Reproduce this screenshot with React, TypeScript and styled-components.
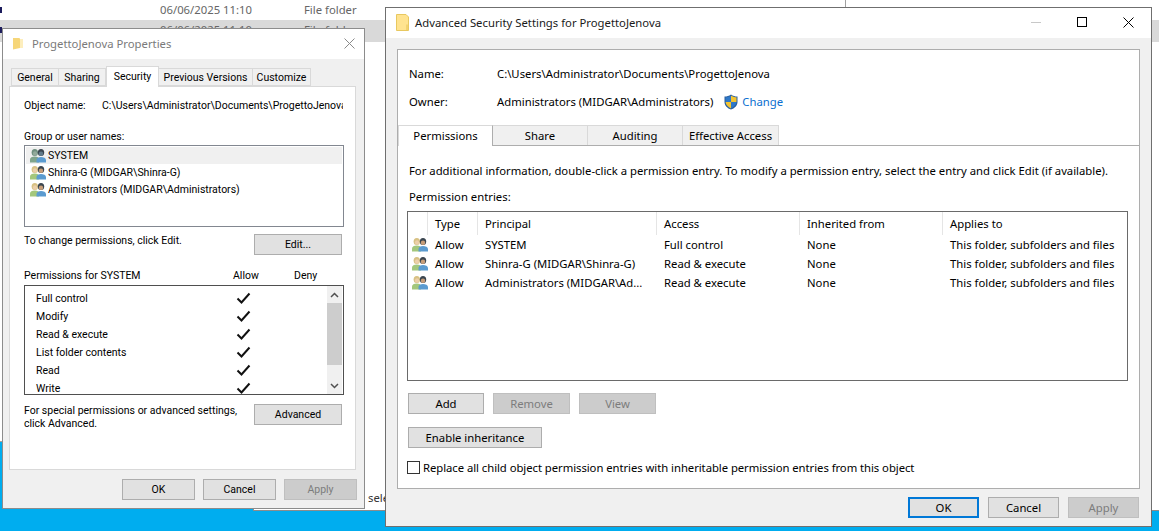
import React from 'react';
import styled, { createGlobalStyle } from 'styled-components';

const NOTO = `"Noto Sans", "Open Sans", "Liberation Sans", sans-serif`;
const ROBOTO = `Roboto, "Liberation Sans", sans-serif`;

const GlobalStyle = createGlobalStyle`
  html, body {
    margin: 0;
    padding: 0;
    background: #00adef;
  }
  body {
    width: 1159px;
    height: 531px;
    overflow: hidden;
    font-family: ${NOTO};
    font-size: 11.3px;
    color: #000;
  }
`;

const Desktop = styled.div`
  position: relative;
  width: 1159px;
  height: 531px;
  overflow: hidden;
  background: #00adef;
`;

const Explorer = styled.div`
  position: absolute;
  left: 0;
  top: 0;
  width: 1159px;
  height: 442px;
  background: #fff;
  border-bottom: 1px solid #a0a0a0;
  box-sizing: border-box;
`;
const ExplorerRow = styled.div<{ $selected?: boolean }>`
  display: grid;
  grid-template-columns: 160px 144px 1fr;
  height: ${p => (p.$selected ? 22 : 20)}px;
  line-height: 20px;
  color: #666;
  background: ${p => (p.$selected ? '#d9d9d9' : '#fff')};
`;
const ExplorerMark = styled.span`
  width: 2px;
  height: 6px;
  margin-top: 7px;
  background: #1c1c5c;
`;
const ExplorerDivider = styled.div`
  position: absolute;
  left: 845px;
  top: 0;
  width: 1px;
  height: 8px;
  background: #a0a0a0;
`;
const StatusWindow = styled.div`
  position: absolute;
  left: 253px;
  top: 440px;
  width: 906px;
  height: 71px;
  box-sizing: border-box;
  background: #fff;
  border-bottom: 1px solid #8c8c8c;
  border-left: 1px solid #8c8c8c;
  padding: 50px 0 0 114px;
  color: #333;
`;

const Window = styled.div`
  position: absolute;
  box-sizing: border-box;
  display: flex;
  flex-direction: column;
  background: #f0f0f0;
  border: 1px solid #6f6f6f;
`;
const PropsWindow = styled(Window)`
  left: 2px;
  top: 28px;
  width: 363px;
  height: 481px;
  border-color: #8c8c8c;
  font-family: ${ROBOTO};
  font-size: 10.5px;
`;
const AdvancedWindow = styled(Window)`
  left: 385px;
  top: 7px;
  width: 767px;
  height: 520px;
`;
const TitleBar = styled.div<{ $inset: number }>`
  box-sizing: border-box;
  display: flex;
  align-items: center;
  height: 30px;
  flex: none;
  padding: 0 0 2px ${p => p.$inset}px;
  background: #fff;
`;
const TitleText = styled.div<{ $dim?: boolean; $gap: number }>`
  font-family: ${NOTO};
  font-size: 11.3px;
  color: ${p => (p.$dim ? '#7a7a7a' : '#1a1a1a')};
  margin-left: ${p => p.$gap}px;
`;
const Spacer = styled.div`
  flex: 1;
`;
const CaptionButton = styled.div<{ $w: number }>`
  width: ${p => p.$w}px;
  display: flex;
  justify-content: center;
  align-items: center;
`;

const PropsBody = styled.div`
  display: flex;
  flex-direction: column;
  flex: 1;
  padding: 9px 7px 0 6px;
`;
const PropsTabs = styled.div`
  display: flex;
  align-items: flex-end;
  height: 18px;
  margin-left: 2px;
  position: relative;
  z-index: 1;
`;
const PropsTab = styled.div<{ $w: number; $active?: boolean }>`
  box-sizing: border-box;
  width: ${p => p.$w}px;
  height: ${p => (p.$active ? 21 : 18)}px;
  margin-bottom: ${p => (p.$active ? -1 : 0)}px;
  border: 1px solid #d9d9d9;
  border-bottom: ${p => (p.$active ? 'none' : '1px solid #d9d9d9')};
  border-left: ${p => (p.$active ? '1px solid #d9d9d9' : 'none')};
  background: ${p => (p.$active ? '#fff' : '#f0f0f0')};
  text-align: center;
  line-height: ${p => (p.$active ? 19 : 18)}px;
  &:first-child {
    border-left: 1px solid #d9d9d9;
  }
`;
const PropsPanel = styled.div`
  box-sizing: border-box;
  width: 347px;
  height: 384px;
  border: 1px solid #d9d9d9;
  background: #fff;
  padding: 11px 0 0 14px;
  display: flex;
  flex-direction: column;
`;
const Line = styled.div<{ $top?: number }>`
  height: 16px;
  line-height: 16px;
  margin-top: ${p => p.$top ?? 0}px;
  white-space: nowrap;
`;
const ObjectRow = styled(Line)`
  display: grid;
  grid-template-columns: 78px 241px;
  width: 320px;
`;
const ObjectPath = styled.span`
  overflow: hidden;
`;
const UserList = styled.div`
  box-sizing: border-box;
  width: 320px;
  height: 82px;
  padding: 1px;
  border: 1px solid #828790;
`;
const UserRow = styled.div<{ $selected?: boolean }>`
  display: flex;
  align-items: center;
  gap: 2px;
  height: 17px;
  padding-left: 4px;
  background: ${p => (p.$selected ? '#f0f0f0' : '#fff')};
`;
const SplitRow = styled.div<{ $top: number }>`
  display: flex;
  justify-content: space-between;
  width: 318px;
  margin-top: ${p => p.$top}px;
`;
const SideText = styled.div`
  line-height: 13px;
`;
const HeaderRow = styled.div`
  display: grid;
  grid-template-columns: 209px 61px 1fr;
  width: 320px;
  height: 16px;
  line-height: 16px;
  margin-top: 13px;
`;
const PermList = styled.div`
  position: relative;
  box-sizing: border-box;
  width: 320px;
  height: 110px;
  margin-top: 1px;
  padding-top: 3px;
  border: 1px solid #4f4f4f;
`;
const PermRow = styled.div`
  display: grid;
  grid-template-columns: 200px 30px;
  align-items: center;
  height: 18px;
  padding-left: 11px;
`;
const ScrollBar = styled.div`
  position: absolute;
  right: 1px;
  top: 0;
  bottom: 0;
  width: 15px;
  background: #f0f0f0;
  display: flex;
  flex-direction: column;
`;
const ScrollArrow = styled.div`
  height: 17px;
  display: flex;
  align-items: center;
  justify-content: center;
`;
const ScrollThumb = styled.div`
  height: 62px;
  background: #cdcdcd;
`;
const ScrollTrack = styled.div`
  flex: 1;
`;

const Button = styled.div<{ $w: number; $disabled?: boolean; $default?: boolean }>`
  box-sizing: border-box;
  flex: none;
  width: ${p => p.$w}px;
  height: 21px;
  display: flex;
  align-items: center;
  justify-content: center;
  background: ${p => (p.$disabled ? '#cccccc' : '#e1e1e1')};
  border: ${p =>
    p.$default
      ? '2px solid #0078d7'
      : p.$disabled
        ? '1px solid #bfbfbf'
        : '1px solid #adadad'};
  color: ${p => (p.$disabled ? '#7c7c7c' : '#000')};
`;
const Footer = styled.div<{ $top: number; $gap: number; $right?: number }>`
  display: flex;
  justify-content: flex-end;
  gap: ${p => p.$gap}px;
  padding-top: ${p => p.$top}px;
  padding-right: ${p => p.$right ?? 0}px;
`;

const AdvBody = styled.div`
  flex: 1;
  display: flex;
  flex-direction: column;
  padding: 11px 11px 0 11px;
`;
const AdvPanel = styled.div`
  box-sizing: border-box;
  width: 743px;
  height: 440px;
  border: 1px solid #adadad;
  background: #fff;
  display: flex;
  flex-direction: column;
`;
const InfoGrid = styled.div`
  display: grid;
  grid-template-columns: 88px 1fr;
  grid-auto-rows: 16px;
  row-gap: 12px;
  padding: 16px 0 0 11px;
  line-height: 16px;
`;
const OwnerCell = styled.div`
  display: flex;
  align-items: center;
  gap: 4px;
`;
const ShieldSlot = styled.span`
  display: flex;
  margin-left: 7px;
`;
const ChangeLink = styled.span`
  color: #0a6fd0;
`;
const AdvTabs = styled.div`
  display: flex;
  height: 21px;
  margin-top: 15px;
  border-bottom: 1px solid #adadad;
  box-sizing: border-box;
`;
const AdvTab = styled.div<{ $active?: boolean; $w: number }>`
  box-sizing: border-box;
  width: ${p => p.$w}px;
  height: ${p => (p.$active ? 21 : 20)}px;
  border: 1px solid #d9d9d9;
  border-left: ${p => (p.$active ? '1px solid #d9d9d9' : 'none')};
  border-right: ${p => (p.$active ? '1px solid #adadad' : '1px solid #d9d9d9')};
  border-bottom: none;
  background: ${p => (p.$active ? '#fff' : '#f0f0f0')};
  text-align: center;
  line-height: 19px;
  position: relative;
`;
const PermContent = styled.div`
  display: flex;
  flex-direction: column;
  padding: 17px 0 0 11px;
`;
const EntryTable = styled.div`
  box-sizing: border-box;
  width: 721px;
  height: 170px;
  margin: 6px 0 0 -2px;
  border: 1px solid #6a6a6a;
`;
const COLUMNS = '20px 50px 179px 143px 143px 1fr';
const TableHead = styled.div`
  display: grid;
  grid-template-columns: ${COLUMNS};
  height: 23px;
  line-height: 24px;
`;
const HeadCell = styled.div`
  padding-left: 7px;
  border-right: 1px solid #e5e5e5;
  height: 23px;
  &:last-child {
    border-right: none;
  }
`;
const TableRow = styled.div`
  display: grid;
  grid-template-columns: ${COLUMNS};
  height: 19px;
  line-height: 19px;
`;
const Cell = styled.div`
  padding-left: 7px;
  white-space: nowrap;
`;
const IconCell = styled.div`
  display: flex;
  align-items: center;
  padding-left: 4px;
`;
const ButtonRow = styled.div<{ $top: number }>`
  display: flex;
  gap: 9px;
  margin: ${p => p.$top}px 0 0 -1px;
`;
const CheckRow = styled.div`
  display: flex;
  align-items: center;
  gap: 3px;
  height: 14px;
  margin: 12px 0 0 -2px;
  letter-spacing: -0.05px;
`;
const CheckBox = styled.div`
  box-sizing: border-box;
  width: 13px;
  height: 13px;
  border: 1px solid #333;
  background: #fff;
`;

const FolderIcon = () => (
  <svg width="13" height="17" viewBox="0 0 13 17">
    <path d="M0.500 0.500H10L12.500 3V16.500H0.500z" fill="#ffe38f" stroke="#e8c860" />
    <path d="M10 10.500H12V16H10z" fill="#f3d26f" />
  </svg>
);

const SmallFolderIcon = () => (
  <svg width="10" height="13" viewBox="0 0 10 13">
    <path d="M0 1H6.500L7 2V11L0 12.500z" fill="#f6d679" />
    <path d="M7 2H10V11H7z" fill="#fdeebd" />
  </svg>
);

const UsersIcon = ({ gray }: { gray?: boolean }) => (
  <svg width="16" height="14" viewBox="0 0 16 14">
    <ellipse cx="4.800" cy="3.600" rx="3.200" ry="3.500" fill={gray ? '#6f8f7f' : '#d8c184'} />
    <ellipse cx="5" cy="4.500" rx="2.100" ry="2.200" fill={gray ? '#93aa9c' : '#eccfaa'} />
    <path d="M0 13.500V10.500c0-2 2-3 4.800-3S9 8.500 9 10.500v3z" fill={gray ? '#7fa48c' : '#a3c77c'} />
    <ellipse cx="11" cy="3.600" rx="3.200" ry="3.500" fill="#3b4650" />
    <ellipse cx="11" cy="4.700" rx="2.200" ry="2.200" fill={gray ? '#607a8a' : '#c79d78'} />
    <path d="M6.500 13.500V11c0-2 2-3 4.500-3s5 1 5 3v2.500z" fill="#5b9bd0" />
  </svg>
);

const ShieldIcon = () => (
  <svg width="14" height="16" viewBox="0 0 14 16">
    <path d="M7 0.500C5 2 3 2.500 0.500 2.500V8c0 3.500 3 6.500 6.500 7.500 3.500-1 6.500-4 6.500-7.500V2.500C11 2.500 9 2 7 0.500z" fill="#2a5f9e" />
    <path d="M7 1.500V8H1.500V3.300C3.500 3.200 5.500 2.700 7 1.500z" fill="#2f78c8" />
    <path d="M7 1.500C8.500 2.700 10.500 3.200 12.500 3.300V8H7z" fill="#f4c430" />
    <path d="M7 8H1.500C1.800 10.800 4.200 13.400 7 14.400z" fill="#f4c430" />
    <path d="M7 8h5.500C12.200 10.800 9.800 13.400 7 14.400z" fill="#2f78c8" />
  </svg>
);

const CheckMark = () => (
  <svg width="15" height="13" viewBox="0 0 15 13">
    <path d="M1.500 6.500L5.500 10.500L13.500 1.500" fill="none" stroke="#111" strokeWidth="2" />
  </svg>
);

const Chevron = ({ up }: { up?: boolean }) => (
  <svg width="9" height="6" viewBox="0 0 9 6">
    <path d={up ? 'M1 5L4.500 1.500L8 5' : 'M1 1L4.500 4.500L8 1'} fill="none" stroke="#505050" strokeWidth="1.500" />
  </svg>
);

const CloseGlyph = ({ color }: { color: string }) => (
  <svg width="11" height="11" viewBox="0 0 11 11">
    <path d="M0.500 0.500L10.500 10.500M10.500 0.500L0.500 10.500" stroke={color} strokeWidth="1" />
  </svg>
);

const MaxGlyph = () => (
  <svg width="10" height="10" viewBox="0 0 10 10">
    <rect x="0.500" y="0.500" width="9" height="9" fill="none" stroke="#000" />
  </svg>
);

const MinGlyph = () => (
  <svg width="10" height="1" viewBox="0 0 10 1">
    <rect width="10" height="1" fill="#c8c8c8" />
  </svg>
);

const PROPS_TABS = [
  { label: 'General', w: 48 },
  { label: 'Sharing', w: 47 },
  { label: 'Security', w: 53, active: true },
  { label: 'Previous Versions', w: 94 },
  { label: 'Customize', w: 58 },
];
const USERS = [
  { name: 'SYSTEM', selected: true },
  { name: 'Shinra-G (MIDGAR\\Shinra-G)' },
  { name: 'Administrators (MIDGAR\\Administrators)' },
];
const PERMS = ['Full control', 'Modify', 'Read & execute', 'List folder contents', 'Read', 'Write'];
const ADV_TABS = [
  { label: 'Permissions', w: 95, active: true },
  { label: 'Share', w: 95 },
  { label: 'Auditing', w: 95 },
  { label: 'Effective Access', w: 96 },
];
const ENTRIES = [
  { principal: 'SYSTEM', access: 'Full control' },
  { principal: 'Shinra-G (MIDGAR\\Shinra-G)', access: 'Read & execute' },
  { principal: 'Administrators (MIDGAR\\Ad...', access: 'Read & execute' },
];

export default function App() {
  return (
    <Desktop>
      <GlobalStyle />
      <Explorer>
        <ExplorerRow>
          <ExplorerMark />
          <span>06/06/2025 11:10</span>
          <span>File folder</span>
        </ExplorerRow>
        <ExplorerRow $selected>
          <ExplorerMark />
          <span>06/06/2025 11:10</span>
          <span>File folder</span>
        </ExplorerRow>
        <ExplorerDivider />
      </Explorer>
      <StatusWindow>selected</StatusWindow>

      <PropsWindow>
        <TitleBar $inset={10}>
          <SmallFolderIcon />
          <TitleText $dim $gap={9}>ProgettoJenova Properties</TitleText>
          <Spacer />
          <CaptionButton $w={30}>
            <CloseGlyph color="#8a8a8a" />
          </CaptionButton>
        </TitleBar>
        <PropsBody>
          <PropsTabs>
            {PROPS_TABS.map(t => (
              <PropsTab key={t.label} $w={t.w} $active={t.active}>
                {t.label}
              </PropsTab>
            ))}
          </PropsTabs>
          <PropsPanel>
            <ObjectRow>
              <span>Object name:</span>
              <ObjectPath>C:\Users\Administrator\Documents\ProgettoJenova</ObjectPath>
            </ObjectRow>
            <Line $top={15}>Group or user names:</Line>
            <UserList>
              {USERS.map(u => (
                <UserRow key={u.name} $selected={u.selected}>
                  <UsersIcon gray={u.selected} />
                  {u.name}
                </UserRow>
              ))}
            </UserList>
            <SplitRow $top={7}>
              <SideText>To change permissions, click Edit.</SideText>
              <Button $w={88}>Edit...</Button>
            </SplitRow>
            <HeaderRow>
              <span>Permissions for SYSTEM</span>
              <span>Allow</span>
              <span>Deny</span>
            </HeaderRow>
            <PermList>
              {PERMS.map(p => (
                <PermRow key={p}>
                  <span>{p}</span>
                  <CheckMark />
                </PermRow>
              ))}
              <ScrollBar>
                <ScrollArrow>
                  <Chevron up />
                </ScrollArrow>
                <ScrollThumb />
                <ScrollTrack />
                <ScrollArrow>
                  <Chevron />
                </ScrollArrow>
              </ScrollBar>
            </PermList>
            <SplitRow $top={9}>
              <SideText>
                For special permissions or advanced settings,
                <br />
                click Advanced.
              </SideText>
              <Button $w={88}>Advanced</Button>
            </SplitRow>
          </PropsPanel>
          <Footer $top={9} $gap={8}>
            <Button $w={73}>OK</Button>
            <Button $w={73}>Cancel</Button>
            <Button $w={73} $disabled>
              Apply
            </Button>
          </Footer>
        </PropsBody>
      </PropsWindow>

      <AdvancedWindow>
        <TitleBar $inset={10}>
          <FolderIcon />
          <TitleText $gap={6}>Advanced Security Settings for ProgettoJenova</TitleText>
          <Spacer />
          <CaptionButton $w={46}>
            <MinGlyph />
          </CaptionButton>
          <CaptionButton $w={46}>
            <MaxGlyph />
          </CaptionButton>
          <CaptionButton $w={46}>
            <CloseGlyph color="#000" />
          </CaptionButton>
        </TitleBar>
        <AdvBody>
          <AdvPanel>
            <InfoGrid>
              <span>Name:</span>
              <span>C:\Users\Administrator\Documents\ProgettoJenova</span>
              <span>Owner:</span>
              <OwnerCell>
                Administrators (MIDGAR\Administrators)
                <ShieldSlot>
                  <ShieldIcon />
                </ShieldSlot>
                <ChangeLink>Change</ChangeLink>
              </OwnerCell>
            </InfoGrid>
            <AdvTabs>
              {ADV_TABS.map(t => (
                <AdvTab key={t.label} $w={t.w} $active={t.active}>
                  {t.label}
                </AdvTab>
              ))}
            </AdvTabs>
            <PermContent>
              <Line>
                For additional information, double-click a permission entry. To modify a permission entry, select the entry and click Edit (if available).
              </Line>
              <Line $top={10}>Permission entries:</Line>
              <EntryTable>
                <TableHead>
                  <HeadCell />
                  <HeadCell>Type</HeadCell>
                  <HeadCell>Principal</HeadCell>
                  <HeadCell>Access</HeadCell>
                  <HeadCell>Inherited from</HeadCell>
                  <HeadCell>Applies to</HeadCell>
                </TableHead>
                {ENTRIES.map(e => (
                  <TableRow key={e.principal}>
                    <IconCell>
                      <UsersIcon />
                    </IconCell>
                    <Cell>Allow</Cell>
                    <Cell>{e.principal}</Cell>
                    <Cell>{e.access}</Cell>
                    <Cell>None</Cell>
                    <Cell>This folder, subfolders and files</Cell>
                  </TableRow>
                ))}
              </EntryTable>
              <ButtonRow $top={12}>
                <Button $w={76}>Add</Button>
                <Button $w={77} $disabled>
                  Remove
                </Button>
                <Button $w={77} $disabled>
                  View
                </Button>
              </ButtonRow>
              <ButtonRow $top={13}>
                <Button $w={134}>Enable inheritance</Button>
              </ButtonRow>
              <CheckRow>
                <CheckBox />
                Replace all child object permission entries with inheritable permission entries from this object
              </CheckRow>
            </PermContent>
          </AdvPanel>
          <Footer $top={8} $gap={9} $right={1}>
            <Button $w={71} $default>
              OK
            </Button>
            <Button $w={71}>Cancel</Button>
            <Button $w={71} $disabled>
              Apply
            </Button>
          </Footer>
        </AdvBody>
      </AdvancedWindow>
    </Desktop>
  );
}
